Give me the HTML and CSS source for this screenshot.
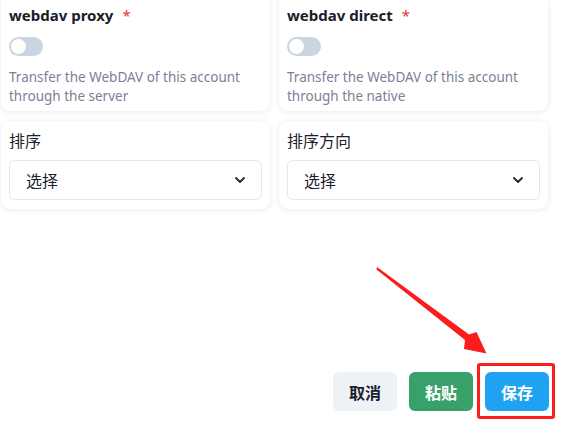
FILE: index.html
```html
<!DOCTYPE html>
<html lang="zh">
<head>
<meta charset="utf-8">
<link rel="stylesheet" href="styles.css">
</head>
<body>
<div class="page">
  <div class="grid">
    <div class="card">
      <div class="title">webdav proxy<span class="req">*</span></div>
      <div class="switch"><span class="knob"></span></div>
      <div class="desc">Transfer the WebDAV of this account through the server</div>
    </div>
    <div class="card">
      <div class="title">webdav direct<span class="req">*</span></div>
      <div class="switch"><span class="knob"></span></div>
      <div class="desc">Transfer the WebDAV of this account through the native</div>
    </div>
    <div class="card card-sel">
      <div class="label">排序</div>
      <div class="select"><span>选择</span>
        <svg class="chev" viewBox="0 0 10 6" width="10" height="6"><path d="M1 1l4 4 4-4" fill="none" stroke="#1e293b" stroke-width="1.8" stroke-linecap="round" stroke-linejoin="round"/></svg>
      </div>
    </div>
    <div class="card card-sel">
      <div class="label">排序方向</div>
      <div class="select"><span>选择</span>
        <svg class="chev" viewBox="0 0 10 6" width="10" height="6"><path d="M1 1l4 4 4-4" fill="none" stroke="#1e293b" stroke-width="1.8" stroke-linecap="round" stroke-linejoin="round"/></svg>
      </div>
    </div>
  </div>
  <div class="actions">
    <button class="btn btn-cancel">取消</button>
    <button class="btn btn-paste">粘贴</button>
    <button class="btn btn-save">保存</button>
  </div>
</div>
<div class="hl-box"></div>
<svg class="arrow" width="563" height="424" viewBox="0 0 563 424">
  <polygon points="377,267 469,334.5 476.5,332 486.5,353.5 464,349 465,340 376.5,269.5" fill="#fb1d1d"/>
</svg>
</body>
</html>
```
FILE: styles.css
```css
html, body {
  margin: 0;
  padding: 0;
  background: #ffffff;
}
body {
  width: 563px;
  height: 424px;
  overflow: hidden;
  position: relative;
  font-family: "Noto Sans", "Noto Sans CJK SC", sans-serif;
  color: #1a202c;
}
.page {
  height: 424px;
  display: flex;
  flex-direction: column;
}
.grid {
  margin-top: -6px;
  margin-left: 1px;
  display: grid;
  grid-template-columns: 269px 269px;
  column-gap: 9px;
  row-gap: 10px;
}
.card {
  background: #fff;
  border-radius: 9px;
  box-shadow: 0 1px 6px rgba(15, 23, 42, 0.09);
  padding: 10px 8px 5px 8px;
}
.title {
  font-size: 15px;
  font-weight: 700;
  line-height: 22px;
  color: #1a202c;
}
.req {
  color: #e5484d;
  margin-left: 9px;
  font-weight: 500;
}
.switch {
  margin-top: 11px;
  width: 34px;
  height: 19px;
  border-radius: 10px;
  background: #cbd5e1;
  position: relative;
}
.knob {
  position: absolute;
  left: 2px;
  top: 2px;
  width: 15px;
  height: 15px;
  border-radius: 50%;
  background: #fff;
}
.desc {
  margin-top: 12px;
  font-size: 13.5px;
  line-height: 19px;
  color: #7b7f95;
}
.card-sel {
  padding: 8px 8px 9px 8px;
}
.label {
  font-size: 16px;
  line-height: 24px;
  color: #1a202c;
}
.select {
  margin-top: 7px;
  height: 38px;
  border: 1px solid #e2e8f0;
  border-radius: 6px;
  display: flex;
  align-items: center;
  justify-content: space-between;
  padding: 0 16px 0 16px;
  font-size: 16px;
  color: #1a202c;
}
.chev {
  display: block;
}
.actions {
  margin-top: auto;
  margin-bottom: 13px;
  margin-right: 14px;
  display: flex;
  justify-content: flex-end;
  gap: 12px;
}
.btn {
  width: 64px;
  height: 39px;
  border: none;
  border-radius: 6px;
  font-family: "Noto Sans CJK SC", sans-serif;
  font-size: 16px;
  font-weight: 700;
  padding: 0;
}
.btn-cancel {
  background: #edf2f7;
  color: #1a202c;
}
.btn-paste {
  background: #38a169;
  color: #fff;
}
.btn-save {
  background: #1fa2f2;
  color: #fff;
}
.hl-box {
  position: absolute;
  left: 477px;
  top: 363px;
  width: 72px;
  height: 50px;
  border: 3px solid #fb1d1d;
  border-radius: 3px;
}
.arrow {
  position: absolute;
  left: 0;
  top: 0;
  pointer-events: none;
}
```
